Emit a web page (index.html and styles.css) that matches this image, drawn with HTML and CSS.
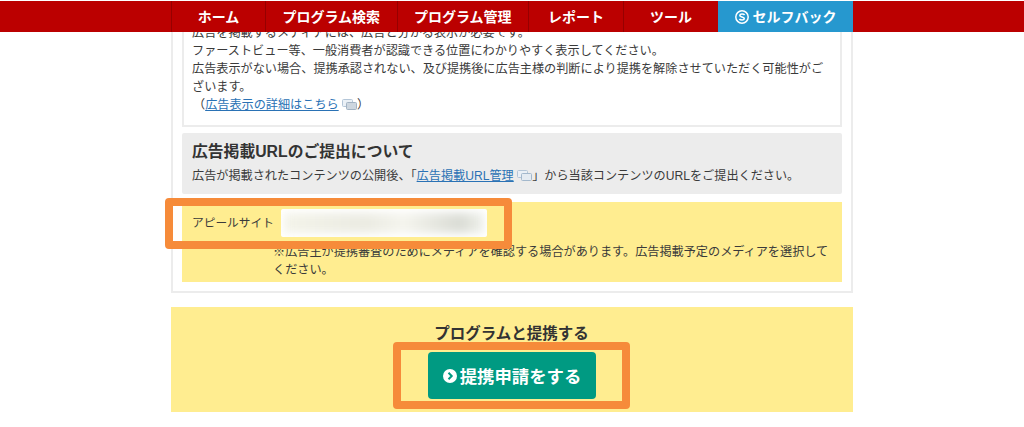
FILE: index.html
```html
<!DOCTYPE html>
<html lang="ja">
<head>
<meta charset="utf-8">
<title>提携申請</title>
<link rel="stylesheet" href="styles.css">
</head>
<body>
<nav class="nav">
  <ul class="nav-list">
    <li class="nav-item nav-home">ホーム</li>
    <li class="nav-item nav-wide">プログラム検索</li>
    <li class="nav-item nav-wide">プログラム管理</li>
    <li class="nav-item nav-short">レポート</li>
    <li class="nav-item nav-short">ツール</li>
    <li class="nav-item nav-self">
      <svg class="self-icon" viewBox="0 0 14 14" aria-hidden="true"><circle cx="7" cy="7" r="6.200" fill="none" stroke="#fff" stroke-width="1.500"/><path d="M9.600 4.900C8.600 3.700 5 3.500 4.800 5.400 4.600 7.300 9.500 6.600 9.300 8.700 9.100 10.600 5.300 10.300 4.400 9" fill="none" stroke="#fff" stroke-width="1.600"/></svg>
      セルフバック
    </li>
  </ul>
</nav>
<main class="page">
  <section class="card">
    <div class="notice">
      <p>広告を掲載するメディアには、広告と分かる表示が必要です。<br>ファーストビュー等、一般消費者が認識できる位置にわかりやすく表示してください。<br>広告表示がない場合、提携承認されない、及び提携後に広告主様の判断により提携を解除させていただく可能性がございます。</p>
      <p class="notice-link">（<a href="#">広告表示の詳細はこちら</a> <svg class="ext" viewBox="0 0 15 11" aria-hidden="true"><rect x=".5" y=".5" width="10" height="7" rx="1" fill="#eaf0f6" stroke="#b4c6d8"/><rect x="4.500" y="3.500" width="10" height="7" rx="1" fill="#cdd6df" stroke="#a3b3c3"/></svg>）</p>
    </div>
    <div class="submit-info">
      <h2>広告掲載URLのご提出について</h2>
      <p>広告が掲載されたコンテンツの公開後、「<a href="#">広告掲載URL管理</a> <svg class="ext" viewBox="0 0 15 11" aria-hidden="true"><rect x=".5" y=".5" width="10" height="7" rx="1" fill="#eaf0f6" stroke="#b4c6d8"/><rect x="4.500" y="3.500" width="10" height="7" rx="1" fill="#e4ebf2" stroke="#a3b8cc"/></svg>」から当該コンテンツのURLをご提出ください。</p>
    </div>
    <div class="appeal">
      <div class="appeal-row">
        <span class="appeal-label">アピールサイト</span>
        <span class="appeal-input"><span class="smear"></span></span>
      </div>
      <p class="appeal-note">※広告主が提携審査のためにメディアを確認する場合があります。広告掲載予定のメディアを選択してください。</p>
      <span class="mark mark-site"></span>
    </div>
  </section>
  <section class="apply">
    <h3>プログラムと提携する</h3>
    <div class="apply-mark">
      <button class="apply-btn" type="button">
        <svg class="btn-icon" viewBox="0 0 14 14" aria-hidden="true"><circle cx="7" cy="7" r="7" fill="#fff"/><path d="M5.500 3.800 8.700 7 5.500 10.200" fill="none" stroke="#009a82" stroke-width="2"/></svg>
        提携申請をする
      </button>
    </div>
  </section>
</main>
</body>
</html>
```
FILE: styles.css
```css
* { box-sizing: border-box; }
html, body { margin: 0; padding: 0; height: 427px; overflow: hidden; background: #fff; }
body { font-family: "Liberation Sans", "Noto Sans CJK JP", sans-serif; font-size: 12.150px; line-height: 18px; color: #3a3a3a; }
p, h2, h3, ul { margin: 0; padding: 0; }
a { color: #2a72b5; text-decoration: underline; }

.nav { position: fixed; top: 1px; left: 0; right: 0; height: 31px; background: #bb0000; z-index: 5; }
.nav-list { display: flex; width: 682px; height: 100%; margin: 0 auto; list-style: none; }
.nav-item { display: flex; align-items: center; justify-content: center; border-left: 1px solid #960000; color: #fff; font-size: 14px; font-weight: 700; }
.nav-home { width: 94px; }
.nav-wide { width: 131.500px; }
.nav-short { width: 95px; }
.nav-self { width: 135px; gap: 4px; background: #2698cf; border-left: 0; }
.self-icon { width: 14px; height: 14px; }

.page { width: 682px; margin: 0 auto; padding-top: 24px; }
.card { padding: 0 9px 9px 9px; border: 2px solid #ececec; border-top: 0; background: #fff; }
.notice { padding: 0 8px 11px; border: 2px solid #ececec; border-top: 0; }
.notice-link { padding-left: 1px; }
.ext { display: inline-block; width: 15px; height: 11px; vertical-align: -1px; }

.submit-info { margin-top: 6px; height: 61px; padding: 8px 10px; background: #ececec; border-radius: 2px; }
.submit-info h2 { font-size: 15.800px; line-height: 21px; font-weight: 700; color: #333; }
.submit-info p { margin-top: 4px; line-height: 20px; }

.appeal { position: relative; margin-top: 8px; height: 80px; padding: 7px 10px 0; background: #ffed90; }
.appeal-row { display: flex; align-items: center; height: 28px; }
.appeal-label { width: 89px; font-size: 11.700px; }
.appeal-input { display: block; width: 206px; height: 28px; background: #fff; border-radius: 2px; overflow: hidden; }
.smear { display: block; width: 200px; height: 20px; margin: 4px 3px; background: linear-gradient(90deg, #f4f4ea, #ebebe2 40%, #f5f5ee 60%, #dadcd5 88%, #f0f2ec); filter: blur(4px); }
.appeal-note { width: 566px; margin: 7px 0 0 81px; line-height: 17.500px; }
.mark { position: absolute; border: 8px solid #f68b3a; border-radius: 4px; pointer-events: none; }
.mark-site { left: -17px; top: -4px; width: 347px; height: 51px; }

.apply { display: flex; flex-direction: column; align-items: center; height: 105px; margin-top: 14px; padding: 17px 1px 0 0; background: #ffed90; }
.apply h3 { height: 18px; font-size: 15.500px; line-height: 20px; font-weight: 700; color: #333; }
.apply-mark { width: 237px; height: 67px; padding: 2px 27px; border: 8px solid #f68b3a; border-radius: 4px; }
.apply-btn { display: flex; align-items: center; justify-content: center; gap: 3px; width: 168px; height: 47px; padding: 0; border: 0; border-radius: 4px; background: #009a82; color: #fff; font-family: inherit; font-size: 17.400px; font-weight: 700; }
.btn-icon { width: 14px; height: 14px; }
```
